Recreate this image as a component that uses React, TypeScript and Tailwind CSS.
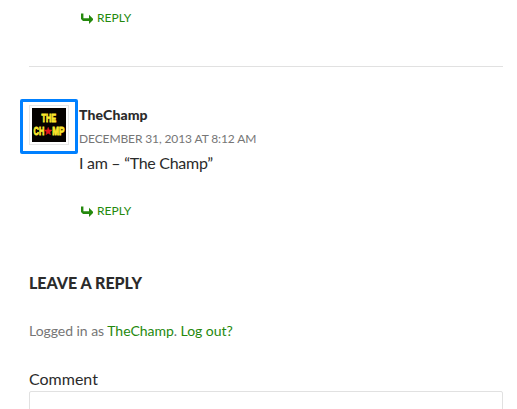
function ReplyLink() {
  return (
    <a className="flex h-6 items-center text-xs leading-6 text-[#24890d]">
      <svg className="mr-[3px] h-[11px] w-[14px]" viewBox="0 0 14 11" fill="currentColor">
        <path d="M2 0.6h2.4v4.6H10V1.8L14.6 6.4 10 11V8H4L2 6z" />
      </svg>
      <span className="ml-px">REPLY</span>
    </a>
  );
}

function Avatar() {
  return (
    <div className="h-10 w-10 border border-[#e6e6e6] bg-white p-[2px]">
      <svg
        className="block h-[34px] w-[34px] overflow-visible"
        viewBox="0 0 34 34"
        fontFamily="'Liberation Sans', sans-serif"
        fontWeight="700"
        fill="#fbe72c"
        stroke="#fbe72c"
        strokeWidth="0.9"
      >
        <rect width="34" height="34" fill="#050200" stroke="none" />
        <text x="9.5" y="14" fontSize="11.5" textLength="14.6" lengthAdjust="spacingAndGlyphs">THE</text>
        <text x="1.6" y="27" fontSize="11.5" textLength="10.6" lengthAdjust="spacingAndGlyphs">CH</text>
        <text x="20.2" y="27" fontSize="11.5" textLength="12.2" lengthAdjust="spacingAndGlyphs">MP</text>
        <path d="M16.2 19.3l1 2.6 2.8.2-2.1 1.8.6 2.8-2.3-1.5-2.3 1.5.6-2.8-2.1-1.8 2.8-.2z" fill="#e4161c" stroke="#e4161c" strokeWidth="0.5" />
      </svg>
    </div>
  );
}

export default function App() {
  return (
    <main className="h-[409px] w-full overflow-hidden bg-white pr-[14px] pl-[29px] font-['Lato',sans-serif] text-base leading-6 text-[#2b2b2b]">
      <div className="h-[66px] pt-[6px] pl-[50px]">
        <ReplyLink />
      </div>
      <article className="flex gap-[10px] border-t border-[#e1e1e1] pt-9">
        <div className="relative mt-[2px] h-10 w-10 shrink-0">
          <Avatar />
          <div className="absolute -top-[6px] -left-[9px] h-[55px] w-[58px] rounded-[2px] border-3 border-[#0080ff]" />
        </div>
        <div>
          <h4 className="text-sm leading-6 font-black tracking-[0.1px]">TheChamp</h4>
          <p className="text-xs leading-6 tracking-[-0.11px] text-[#767676]">DECEMBER 31, 2013 AT 8:12 AM</p>
          <p className="mb-6 tracking-[-0.29px]">I am – “The Champ”</p>
          <ReplyLink />
        </div>
      </article>
      <h3 className="mt-12 mb-6 leading-6 font-black">LEAVE A REPLY</h3>
      <p className="mb-6 text-sm leading-6 tracking-[-0.04px] text-[#767676]">
        Logged in as <a className="text-[#24890d]">TheChamp</a>. <a className="text-[#24890d]">Log out?</a>
      </p>
      <label className="block">Comment</label>
      <div className="-mb-12 h-12 rounded-[2px] border border-[#e1e1e1]" />
    </main>
  );
}
